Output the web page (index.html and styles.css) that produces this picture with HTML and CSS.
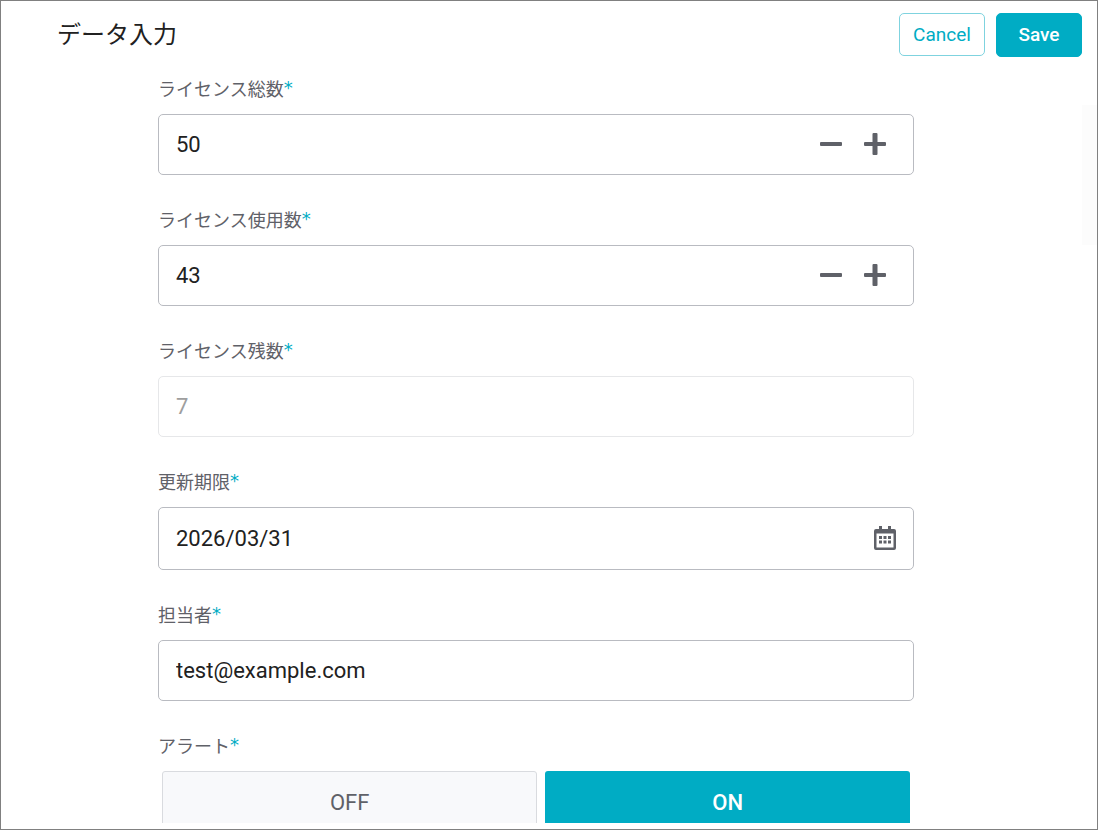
FILE: index.html
```html
<!DOCTYPE html>
<html lang="ja">
<head>
    <meta charset="UTF-8">
    <meta name="viewport" content="width=device-width, initial-scale=1.0">
    <title>データ入力</title>
    <link rel="stylesheet" href="styles.css">
</head>
<body>
    <form class="dialog">
        <header class="dialog-header">
            <h1>データ入力</h1>
            <div class="header-actions">
                <button type="button" class="btn btn-cancel">Cancel</button>
                <button type="submit" class="btn btn-save">Save</button>
            </div>
        </header>

        <div class="dialog-body">
            <div class="scroll-thumb"></div>
            <div class="fields">
                <div class="field">
                    <label for="total">ライセンス総数<span class="required">*</span></label>
                    <div class="control">
                        <input type="text" inputmode="numeric" id="total" value="50">
                        <button type="button" class="icon-btn" aria-label="減らす">
                            <svg width="22" height="22" viewBox="0 0 22 22"><rect y="9" width="22" height="4" rx="1"/></svg>
                        </button>
                        <button type="button" class="icon-btn" aria-label="増やす">
                            <svg width="22" height="22" viewBox="0 0 22 22"><rect y="9" width="22" height="4" rx="1"/><rect x="8.5" width="5" height="22" rx="1"/></svg>
                        </button>
                    </div>
                </div>

                <div class="field">
                    <label for="used">ライセンス使用数<span class="required">*</span></label>
                    <div class="control">
                        <input type="text" inputmode="numeric" id="used" value="43">
                        <button type="button" class="icon-btn" aria-label="減らす">
                            <svg width="22" height="22" viewBox="0 0 22 22"><rect y="9" width="22" height="4" rx="1"/></svg>
                        </button>
                        <button type="button" class="icon-btn" aria-label="増やす">
                            <svg width="22" height="22" viewBox="0 0 22 22"><rect y="9" width="22" height="4" rx="1"/><rect x="8.5" width="5" height="22" rx="1"/></svg>
                        </button>
                    </div>
                </div>

                <div class="field">
                    <label for="remaining">ライセンス残数<span class="required">*</span></label>
                    <div class="control control-disabled">
                        <input type="text" id="remaining" value="7" disabled>
                    </div>
                </div>

                <div class="field">
                    <label for="expiry">更新期限<span class="required">*</span></label>
                    <div class="control control-date">
                        <input type="text" id="expiry" value="2026/03/31">
                        <button type="button" class="icon-btn" aria-label="カレンダー">
                            <svg width="22" height="24" viewBox="0 0 22 24">
                                <path fill-rule="evenodd" d="M5 0h3v3h6V0h3v3h3a2 2 0 0 1 2 2v17a2 2 0 0 1-2 2H2a2 2 0 0 1-2-2V5a2 2 0 0 1 2-2h3zM2.500 7.500v14h17v-14z"/>
                                <path d="M5 10h3v3H5zM9.500 10h3v3h-3zM14 10h3v3h-3zM5 14.500h3v3H5zM9.500 14.500h3v3h-3zM14 14.500h3v3h-3z"/>
                            </svg>
                        </button>
                    </div>
                </div>

                <div class="field">
                    <label for="owner">担当者<span class="required">*</span></label>
                    <div class="control">
                        <input type="email" id="owner" value="test@example.com">
                    </div>
                </div>

                <div class="field" role="group" aria-labelledby="alert-label">
                    <div class="label" id="alert-label">アラート<span class="required">*</span></div>
                    <div class="segments">
                        <button type="button" class="segment">OFF</button>
                        <button type="button" class="segment selected">ON</button>
                    </div>
                </div>
            </div>
        </div>
    </form>
</body>
</html>
```
FILE: styles.css
```css
:root {
    --accent: #00acc4;
    --text: #212121;
    --muted: #5f6168;
    --border: #b9bbc1;
}

* {
    box-sizing: border-box;
}

body {
    margin: 0;
    font-family: Roboto, "Noto Sans CJK JP", sans-serif;
    color: var(--text);
    background: #fff;
}

button,
input {
    font-family: inherit;
}

.dialog {
    display: flex;
    flex-direction: column;
    height: 100vh;
    padding-bottom: 6px;
    border: 1px solid #808080;
}

.dialog-header {
    display: flex;
    align-items: center;
    justify-content: space-between;
    padding: 12px 15px 0 56px;
}

.dialog-header h1 {
    margin: 0;
    font-size: 24px;
    font-weight: 400;
    line-height: 44px;
}

.header-actions {
    display: flex;
    gap: 11px;
}

.btn {
    width: 86px;
    height: 44px;
    padding: 0 0 2px;
    border: 1px solid var(--accent);
    border-radius: 5px;
    font-size: 19px;
    cursor: pointer;
}

.btn-cancel {
    height: 43px;
    padding: 0;
    color: var(--accent);
    background: #fff;
    border-color: #7fd3df;
}

.btn-save {
    color: #fff;
    background: var(--accent);
    font-weight: 500;
}

.dialog-body {
    position: relative;
    flex: 1;
    min-height: 0;
    padding: 21px 26px 0 0;
    overflow: hidden;
}

/* Faint scroll indicator over the right edge */
.scroll-thumb {
    position: absolute;
    top: 48px;
    right: 0;
    width: 15px;
    height: 140px;
    background: #fcfcfc;
}

.fields {
    display: flex;
    flex-direction: column;
    gap: 34px;
    max-width: 756px;
    margin: 0 auto;
}

.field label,
.label {
    display: flex;
    align-items: flex-start;
    height: 24px;
    margin-bottom: 12px;
    color: var(--muted);
    font-size: 18px;
    line-height: 24px;
}

.required {
    color: var(--accent);
    font-family: "DejaVu Sans", sans-serif;
    font-size: 18px;
    line-height: 20px;
}

.control {
    display: flex;
    align-items: center;
    gap: 22px;
    height: 61px;
    padding: 0 27px 0 17px;
    border: 1px solid var(--border);
    border-radius: 5px;
}

.control-date {
    height: 63px;
    padding-right: 17px;
}

.control-disabled {
    border-color: #e6e7e9;
}

.control input {
    flex: 1;
    min-width: 0;
    padding: 0;
    border: none;
    outline: none;
    background: transparent;
    color: var(--text);
    font-size: 22px;
}

.control input:disabled {
    color: #9e9e9e;
}

.icon-btn {
    display: flex;
    padding: 0 0 2px;
    border: none;
    background: none;
    cursor: pointer;
}

.icon-btn svg {
    fill: var(--muted);
}

.segments {
    display: flex;
    gap: 8px;
    padding: 0 4px;
}

.segment {
    flex: 1 1 auto;
    height: 63px;
    padding: 0;
    border: 1px solid #d9dbdf;
    border-radius: 3px;
    background: #f8f9fb;
    color: var(--muted);
    font-size: 22px;
    cursor: pointer;
}

.segment.selected {
    border: none;
    background: var(--accent);
    color: #fff;
    font-weight: 500;
}
```
